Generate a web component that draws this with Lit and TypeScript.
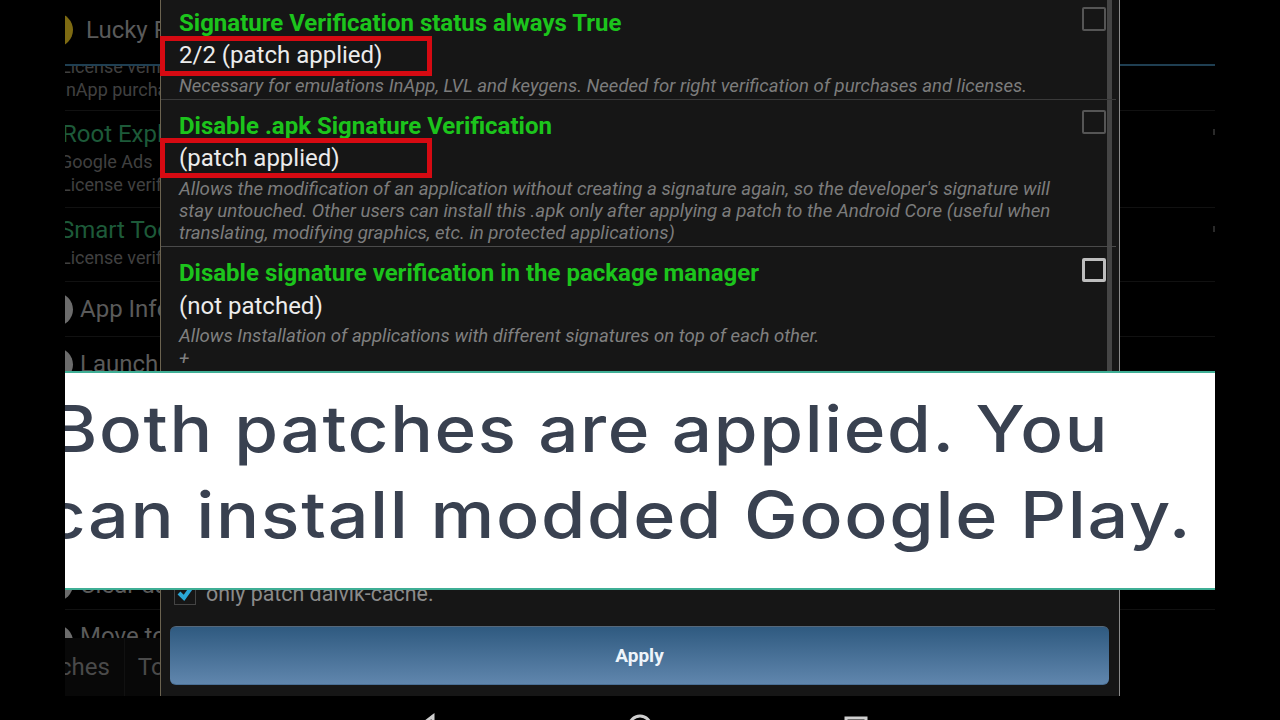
import { LitElement, html, css, svg } from "lit";
import { customElement } from "lit/decorators.js";

const patches = [
  {
    t: "Signature Verification status always True",
    s: "2/2 (patch applied)",
    d: ["Necessary for emulations InApp, LVL and keygens. Needed for right verification of purchases and licenses."],
    cls: "p1", box: true,
  },
  {
    t: "Disable .apk Signature Verification",
    s: "(patch applied)",
    d: [
      "Allows the modification of an application without creating a signature again, so the developer's signature will",
      "stay untouched. Other users can install this .apk only after applying a patch to the Android Core (useful when",
      "translating, modifying graphics, etc. in protected applications)",
    ],
    cls: "p2", box: true,
  },
  {
    t: "Disable signature verification in the package manager",
    s: "(not patched)",
    d: ["Allows Installation of applications with different signatures on top of each other.", "+"],
    cls: "p3", box: false,
  },
];

const bgRows = [
  { cls: "r0", icon: "gold", title: "Lucky Patcher", tone: "grey", sub: [] as string[] },
  { cls: "r1", icon: "", title: "", tone: "", sub: ["License verification", "InApp purchases"] },
  { cls: "r2", icon: "", title: "Root Explorer", tone: "green", sub: ["Google Ads", "License verification"] },
  { cls: "r3", icon: "", title: "Smart Tools", tone: "green", sub: ["License verification"] },
  { cls: "r4", icon: "grey", title: "App Info", tone: "grey", sub: [] },
  { cls: "r5", icon: "grey", title: "Launch", tone: "grey", sub: [] },
  { cls: "r6", icon: "grey", title: "Clear data", tone: "grey", sub: [] },
  { cls: "r7", icon: "grey", title: "Move to", tone: "grey", sub: [] },
];

@customElement("app-root")
export class AppRoot extends LitElement {
  static styles = css`
    :host {
      display: block;
      position: relative;
      width: 1280px;
      height: 720px;
      background: #000;
      overflow: hidden;
      font-family: Roboto, "Liberation Sans", sans-serif;
    }
    .screen {
      position: absolute;
      left: 65px;
      top: 0;
      width: 1150px;
      height: 696px;
      background: #000;
      overflow: hidden;
    }
    .list { display: flex; flex-direction: column; height: 696px; }
    .row {
      position: relative;
      flex: none;
      box-sizing: border-box;
      border-bottom: 1px solid #111;
      overflow: hidden;
      white-space: nowrap;
      display: flex;
      flex-direction: column;
    }
    .r0 { height: 66px; border-bottom: 2px solid #1f3f52; flex-direction: row; align-items: center; gap: 13px; margin-left: -26px; padding-bottom: 4px; }
    .r1 { height: 45px; }
    .r1 .rs:first-child { margin-top: -11px; }
    .r2 { height: 97px; padding-top: 7px; }
    .r3 { height: 74px; padding-top: 6px; }
    .r2::after, .r3::after {
      content: "";
      position: absolute;
      right: 0;
      top: 18px;
      width: 2px;
      height: 6px;
      background: #2a2a2a;
    }
    .r4, .r5, .r6 { height: 55px; flex-direction: row; align-items: center; gap: 7px; margin-left: -25px; }
    .r6 { height: 53px; padding-top: 3px; }
    .r7 { height: 28px; flex-direction: row; gap: 7px; margin-left: -25px; padding-top: 10px; border-bottom: 0; }
    .r7 .ic { margin-top: 5px; }
    .spacer { flex: none; height: 165px; }
    .rt { font-size: 24px; line-height: 32px; }
    .rt.grey { color: #5a5a5a; }
    .rt.green { color: #1d5a39; }
    .rs { font-size: 18px; line-height: 23px; color: #404040; }
    .r1 .rs { margin-left: -4px; }
    .r2 .rt { margin-left: -3px; }
    .r3 .rt { margin-left: -5px; }
    .r2 .rs { margin-left: -5px; }
    .r2 .rs:last-child, .r3 .rs { margin-left: -4px; }
    .ic { width: 33px; height: 33px; border-radius: 50%; flex: none; }
    .ic.gold { background: #7d6a12; width: 34px; height: 34px; }
    .ic.grey { background: #6c6c6c; }

    .tabs {
      flex: none;
      align-self: flex-start;
      height: 58px;
      background: #080808;
      color: #4a4a4a;
      font-size: 24px;
      white-space: nowrap;
      display: flex;
      align-items: center;
      margin-left: -42px;
    }
    .tabs span { padding-right: 14px; }
    .tabs span + span { padding-left: 13px; border-left: 1px solid #111; line-height: 58px; }

    .dialog {
      position: absolute;
      left: 95px;
      top: 0;
      width: 960px;
      height: 696px;
      box-sizing: border-box;
      background: #161616;
      border-left: 1px solid #6b6350;
      border-right: 1px solid #8a8a8a;
      display: flex;
      flex-direction: column;
    }
    .scroll {
      position: absolute;
      right: 7px;
      top: 0;
      width: 5px;
      height: 372px;
      background: #454545;
    }
    .item {
      position: relative;
      padding-left: 18px;
      margin-right: 3px;
      box-sizing: border-box;
      flex: none;
    }
    .p1 { height: 100px; padding-top: 8px; border-bottom: 1px solid #3a3a3a; }
    .p2 { height: 147px; padding-top: 11px; border-bottom: 1px solid #4a4a4a; }
    .p3 { height: 124px; padding-top: 11px; }
    .t { font-size: 24px; font-weight: 700; line-height: 30px; color: #1cc41c; white-space: nowrap; }
    .s { font-size: 24px; line-height: 30px; margin-top: 2px; color: #ececec; white-space: nowrap; position: relative; }
    .p3 .s { margin-top: 3px; }
    .d { margin-top: 5px; font-size: 18.55px; font-style: italic; line-height: 22px; color: #7c7c7c; white-space: nowrap; }
    .p2 .d { font-size: 18.68px; }
    .p3 .d { margin-top: 4px; font-size: 18.6px; line-height: 23px; color: #808080; }
    .box {
      position: absolute;
      left: -19px;
      top: -4px;
      width: 272px;
      height: 40px;
      box-sizing: border-box;
      border: 5px solid #d60a12;
    }
    .p2 .box { top: -5px; }
    .cb {
      position: absolute;
      right: 10px;
      width: 24px;
      height: 24px;
      box-sizing: border-box;
      border: 2px solid #555;
      border-radius: 2px;
    }
    .p1 .cb { top: 7px; }
    .p2 .cb { top: 10px; }
    .p3 .cb { top: 11px; border: 3px solid #bdbdbd; }

    .only {
      position: absolute;
      left: 13px;
      top: 579px;
      display: flex;
      align-items: center;
      gap: 10px;
      font-size: 21.4px;
      line-height: 30px;
      color: #8a8a8a;
      white-space: nowrap;
    }
    .only .c { width: 22px; height: 22px; border: 1px solid #444; box-sizing: border-box; display: grid; place-items: center; }
    .apply {
      position: absolute;
      left: 9px;
      top: 626px;
      width: 939px;
      height: 59px;
      box-sizing: border-box;
      border-radius: 6px;
      background: linear-gradient(#2f5a80, #6086ad);
      border-top: 1px solid #56687a;
      border-bottom: 1px solid #4a6f95;
      color: #eef4fa;
      font-size: 19px;
      font-weight: 700;
      display: grid;
      place-items: center;
    }

    .banner {
      position: absolute;
      left: 0;
      top: 371px;
      width: 1150px;
      height: 219px;
      box-sizing: border-box;
      background: #fff;
      border-top: 2px solid #3fae95;
      border-bottom: 2px solid #3fae95;
      overflow: hidden;
      display: flex;
      flex-direction: column;
      align-items: flex-end;
      font-family: Inter, Lato, sans-serif;
      font-weight: 500;
      font-size: 64px;
      line-height: 86px;
      letter-spacing: 1.5px;
      color: #394150;
      white-space: nowrap;
      padding: 13px 23px 0 0;
    }
    .banner div { transform: scaleX(1.122); transform-origin: right center; }
    .banner .l1 { margin-right: 83px; transform: scaleX(1.108); }

    .nav { position: absolute; left: 0; top: 0; pointer-events: none; }
  `;

  render() {
    const row = (r: (typeof bgRows)[number]) => html`<div class="row ${r.cls}">
      ${r.icon ? html`<div class="ic ${r.icon}"></div>` : ""}
      ${r.title ? html`<div class="rt ${r.tone}">${r.title}</div>` : ""}
      ${r.sub.map((s) => html`<div class="rs">${s}</div>`)}
    </div>`;
    return html`
      <div class="screen">
        <div class="list">
          ${bgRows.slice(0, 6).map(row)}
          <div class="spacer"></div>
          ${bgRows.slice(6).map(row)}
          <div class="tabs"><span>Patches</span><span>Tools</span></div>
        </div>

        <div class="dialog">
          <div class="scroll"></div>
          ${patches.map(
            (p) => html`<div class="item ${p.cls}">
              <div class="t">${p.t}</div>
              <div class="s">${p.box ? html`<div class="box"></div>` : ""}${p.s}</div>
              <div class="d">${p.d.map((l) => html`<div>${l}</div>`)}</div>
              <div class="cb"></div>
            </div>`
          )}
          <div class="only">
            <div class="c">
              <svg width="18" height="18" viewBox="0 0 18 18"><path d="M3 8l5 5 7-10" fill="none" stroke="#2aa7d6" stroke-width="4"/></svg>
            </div>
            <span>only patch dalvik-cache.</span>
          </div>
          <div class="apply">Apply</div>
        </div>

        <div class="banner">
          <div class="l1">Both patches are applied. You</div>
          <div>can install modded Google Play.</div>
        </div>
      </div>
      <svg class="nav" width="1280" height="720" viewBox="0 0 1280 720">
        ${svg`
          <path d="M433 716 L420 726 L433 736 Z" fill="none" stroke="#cfcfcf" stroke-width="3"/>
          <circle cx="640" cy="727" r="11" fill="none" stroke="#cfcfcf" stroke-width="3"/>
          <rect x="846" y="718" width="20" height="20" fill="none" stroke="#cfcfcf" stroke-width="3"/>
        `}
      </svg>
    `;
  }
}
